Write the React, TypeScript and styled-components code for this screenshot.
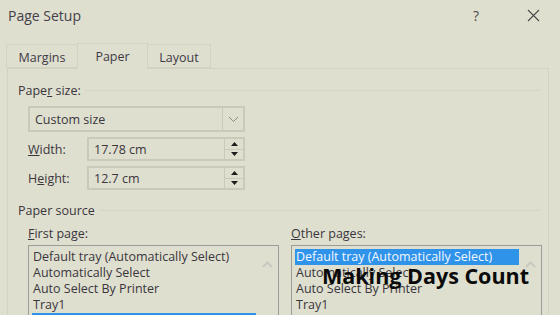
import React from "react";
import styled, { createGlobalStyle } from "styled-components";

const GlobalStyle = createGlobalStyle`
  html, body {
    margin: 0;
    padding: 0;
    background: #dfdfd0;
  }
  body {
    font-family: "Open Sans", "Noto Sans", "DejaVu Sans", sans-serif;
    font-size: 12.5px;
    color: #3a363c;
  }
`;

const Dialog = styled.div`
  position: relative;
  width: 560px;
  height: 315px;
  overflow: hidden;
  background: #dfdfd0;
`;

const TitleBar = styled.div`
  display: flex;
  align-items: center;
  height: 30px;
  padding-left: 8px;
  padding-right: 11px;
`;

const Title = styled.div`
  flex: 1;
  font-size: 14px;
  color: #444049;
`;

const TitleButton = styled.div<{ $w: number; $gap?: number }>`
  width: ${(p) => p.$w}px;
  margin-right: ${(p) => p.$gap ?? 0}px;
  display: flex;
  justify-content: center;
  align-items: center;
  color: #4a4a4a;
  font-size: 14px;
`;

const TabRow = styled.div`
  display: flex;
  align-items: flex-end;
  height: 26px;
  margin-top: 12px;
  padding-left: 7px;
  position: relative;
  z-index: 1;
`;

const Tab = styled.div<{ $active?: boolean; $w: number }>`
  width: ${(p) => p.$w}px;
  height: ${(p) => (p.$active ? 26 : 24)}px;
  margin-bottom: ${(p) => (p.$active ? -1 : 0)}px;
  box-sizing: border-box;
  border: 1px solid #d3d3c3;
  border-bottom: ${(p) => (p.$active ? "none" : "1px solid #d3d3c3")};
  margin-left: -1px;
  background: #dfdfd0;
  display: flex;
  justify-content: center;
  align-items: center;
  padding-top: ${(p) => (p.$active ? 0 : 2)}px;
  color: #3e3a44;
`;

const Panel = styled.div`
  margin-left: 7px;
  width: 542px;
  height: 260px;
  box-sizing: border-box;
  border: 1px solid #d3d3c3;
  border-bottom: none;
  padding: 13px 7px 0 10px;
`;

const GroupHeader = styled.div<{ $top?: number }>`
  display: flex;
  align-items: center;
  gap: 4px;
  height: 16px;
  margin-top: ${(p) => p.$top ?? 0}px;
  &::after {
    content: "";
    flex: 1;
    height: 1px;
    background: #d6d6c6;
  }
`;

const GroupBody = styled.div`
  padding-left: 10px;
`;

const Combo = styled.div`
  display: flex;
  width: 217px;
  height: 26px;
  margin-top: 8px;
  box-sizing: border-box;
  border: 2px solid #cacaba;
`;

const ComboText = styled.div`
  flex: 1;
  display: flex;
  align-items: center;
  padding-left: 5px;
`;

const ComboButton = styled.div`
  width: 20px;
  border-left: 1px solid #cacaba;
  display: flex;
  align-items: center;
  justify-content: center;
`;

const FieldRow = styled.div`
  display: flex;
  align-items: center;
  margin-top: 5px;
`;

const FieldLabel = styled.div`
  width: 59px;
`;

const SpinBox = styled.div`
  display: flex;
  width: 158px;
  height: 24px;
  box-sizing: border-box;
  border: 2px solid #cacaba;
`;

const SpinText = styled.div`
  flex: 1;
  display: flex;
  align-items: center;
  padding-left: 5px;
`;

const Spinner = styled.div`
  width: 18px;
  display: flex;
  flex-direction: column;
  border-left: 1px solid #cacaba;
`;

const SpinHalf = styled.div<{ $down?: boolean }>`
  flex: 1;
  display: flex;
  align-items: center;
  justify-content: center;
  border-top: ${(p) => (p.$down ? "1px solid #cacaba" : "none")};
`;

const Columns = styled.div`
  display: grid;
  grid-template-columns: 251px 251px;
  column-gap: 12px;
  margin-top: 8px;
`;

const Column = styled.div`
  display: flex;
  flex-direction: column;
`;

const ListLabel = styled.div`
  height: 16px;
  line-height: 16px;
  margin-bottom: 3px;
`;

const ListBox = styled.div`
  position: relative;
  height: 90px;
  box-sizing: border-box;
  border: 1px solid #9c9c98;
  border-bottom: none;
  padding: 3px 0 0 3px;
`;

const ListItem = styled.div<{ $selected?: boolean }>`
  width: 223px;
  height: 16px;
  line-height: 16px;
  padding-left: 1px;
  white-space: nowrap;
  background: ${(p) => (p.$selected ? "#2f93ea" : "transparent")};
  color: ${(p) => (p.$selected ? "#f4f8ff" : "#3a363c")};
`;

const ScrollArrow = styled.div`
  position: absolute;
  right: 5px;
  top: 9px;
`;

const U = styled.span`
  text-decoration: underline;
`;

const Caption = styled.div`
  position: absolute;
  left: 322px;
  top: 261px;
  font-family: "Open Sans", "Noto Sans", sans-serif;
  font-weight: 700;
  font-size: 21.5px;
  color: #0a0a0a;
`;

const Chevron = ({ up }: { up?: boolean }) => (
  <svg width="11" height="7" viewBox="0 0 11 7">
    <polyline
      points={up ? "1,6 5.5,1.5 10,6" : "1,1 5.5,5.5 10,1"}
      fill="none"
      stroke={up ? "#c9c9c0" : "#8a8a8a"}
      strokeWidth={up ? 2 : 1}
    />
  </svg>
);

const Tri = ({ down }: { down?: boolean }) => (
  <svg width="7" height="4" viewBox="0 0 7 4">
    <polygon points={down ? "0,0 7,0 3.5,4" : "0,4 7,4 3.5,0"} fill="#1e1e1e" />
  </svg>
);

const Spin = ({ value }: { value: string }) => (
  <SpinBox>
    <SpinText>{value}</SpinText>
    <Spinner>
      <SpinHalf>
        <Tri />
      </SpinHalf>
      <SpinHalf $down>
        <Tri down />
      </SpinHalf>
    </Spinner>
  </SpinBox>
);

const trays = [
  "Default tray (Automatically Select)",
  "Automatically Select",
  "Auto Select By Printer",
  "Tray1",
  "Manual",
];

const App = () => (
  <Dialog>
    <GlobalStyle />
    <TitleBar>
      <Title>Page Setup</Title>
      <TitleButton $w={24} $gap={29}>
        ?
      </TitleButton>
      <TitleButton $w={32}>
        <svg width="13" height="13" viewBox="0 0 13 13">
          <path d="M1 1 L12 12 M12 1 L1 12" stroke="#4a4a4a" strokeWidth="1.1" />
        </svg>
      </TitleButton>
    </TitleBar>
    <TabRow>
      <Tab $w={72}>Margins</Tab>
      <Tab $w={71} $active>
        Paper
      </Tab>
      <Tab $w={64}>Layout</Tab>
    </TabRow>
    <Panel>
      <GroupHeader>
        <span>
          Pape<U>r</U> size:
        </span>
      </GroupHeader>
      <GroupBody>
        <Combo>
          <ComboText>Custom size</ComboText>
          <ComboButton>
            <Chevron />
          </ComboButton>
        </Combo>
        <FieldRow>
          <FieldLabel>
            <U>W</U>idth:
          </FieldLabel>
          <Spin value="17.78 cm" />
        </FieldRow>
        <FieldRow>
          <FieldLabel>
            H<U>e</U>ight:
          </FieldLabel>
          <Spin value="12.7 cm" />
        </FieldRow>
      </GroupBody>
      <GroupHeader $top={12}>
        <span>Paper source</span>
      </GroupHeader>
      <GroupBody>
        <Columns>
          <Column>
            <ListLabel>
              <U>F</U>irst page:
            </ListLabel>
            <ListBox>
              {trays.map((t, i) => (
                <ListItem key={t} $selected={i === 4}>
                  {t}
                </ListItem>
              ))}
              <ScrollArrow>
                <Chevron up />
              </ScrollArrow>
            </ListBox>
          </Column>
          <Column>
            <ListLabel>
              <U>O</U>ther pages:
            </ListLabel>
            <ListBox>
              {trays.map((t, i) => (
                <ListItem key={t} $selected={i === 0}>
                  {t}
                </ListItem>
              ))}
              <ScrollArrow>
                <Chevron up />
              </ScrollArrow>
            </ListBox>
          </Column>
        </Columns>
      </GroupBody>
    </Panel>
    <Caption>Making Days Count</Caption>
  </Dialog>
);

export default App;
